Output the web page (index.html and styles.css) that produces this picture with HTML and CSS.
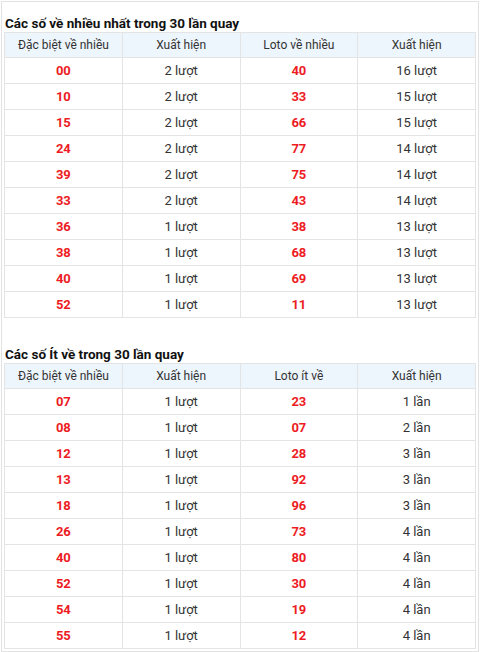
FILE: index.html
```html
<!DOCTYPE html>
<html lang="vi">
<head>
<meta charset="utf-8">
<title>Thống kê</title>
<link rel="stylesheet" href="styles.css">
</head>
<body>
<div class="wrap">
  <h3 class="title">Các số về nhiều nhất trong 30 lần quay</h3>
  <table class="stats">
    <thead>
      <tr><th>Đặc biệt về nhiều</th><th>Xuất hiện</th><th>Loto về nhiều</th><th>Xuất hiện</th></tr>
    </thead>
    <tbody>
      <tr><td class="num">00</td><td>2 lượt</td><td class="num">40</td><td>16 lượt</td></tr>
      <tr><td class="num">10</td><td>2 lượt</td><td class="num">33</td><td>15 lượt</td></tr>
      <tr><td class="num">15</td><td>2 lượt</td><td class="num">66</td><td>15 lượt</td></tr>
      <tr><td class="num">24</td><td>2 lượt</td><td class="num">77</td><td>14 lượt</td></tr>
      <tr><td class="num">39</td><td>2 lượt</td><td class="num">75</td><td>14 lượt</td></tr>
      <tr><td class="num">33</td><td>2 lượt</td><td class="num">43</td><td>14 lượt</td></tr>
      <tr><td class="num">36</td><td>1 lượt</td><td class="num">38</td><td>13 lượt</td></tr>
      <tr><td class="num">38</td><td>1 lượt</td><td class="num">68</td><td>13 lượt</td></tr>
      <tr><td class="num">40</td><td>1 lượt</td><td class="num">69</td><td>13 lượt</td></tr>
      <tr><td class="num">52</td><td>1 lượt</td><td class="num">11</td><td>13 lượt</td></tr>
    </tbody>
  </table>

  <h3 class="title title-second">Các số Ít về trong 30 lần quay</h3>
  <table class="stats">
    <thead>
      <tr><th>Đặc biệt về nhiều</th><th>Xuất hiện</th><th>Loto ít về</th><th>Xuất hiện</th></tr>
    </thead>
    <tbody>
      <tr><td class="num">07</td><td>1 lượt</td><td class="num">23</td><td>1 lần</td></tr>
      <tr><td class="num">08</td><td>1 lượt</td><td class="num">07</td><td>2 lần</td></tr>
      <tr><td class="num">12</td><td>1 lượt</td><td class="num">28</td><td>3 lần</td></tr>
      <tr><td class="num">13</td><td>1 lượt</td><td class="num">92</td><td>3 lần</td></tr>
      <tr><td class="num">18</td><td>1 lượt</td><td class="num">96</td><td>3 lần</td></tr>
      <tr><td class="num">26</td><td>1 lượt</td><td class="num">73</td><td>4 lần</td></tr>
      <tr><td class="num">40</td><td>1 lượt</td><td class="num">80</td><td>4 lần</td></tr>
      <tr><td class="num">52</td><td>1 lượt</td><td class="num">30</td><td>4 lần</td></tr>
      <tr><td class="num">54</td><td>1 lượt</td><td class="num">19</td><td>4 lần</td></tr>
      <tr><td class="num">55</td><td>1 lượt</td><td class="num">12</td><td>4 lần</td></tr>
    </tbody>
  </table>
</div>
</body>
</html>
```

FILE: styles.css
```css
html, body {
  margin: 0;
  padding: 0;
  background: #ffffff;
}

body {
  font-family: Roboto, "Liberation Sans", Arial, sans-serif;
  color: #333333;
}

.wrap {
  margin: 1px 1px 0 1px;
  border: 1px solid #e2e2e2;
  padding: 0 2px 2px 2px;
  width: 472px;
}

.title {
  margin: 12px 0 0 1px;
  font-size: 13.5px;
  line-height: 18px;
  font-weight: 700;
  color: #111111;
}

.title-second {
  margin-top: 27px;
}

.stats {
  width: 472px;
  border-collapse: collapse;
  table-layout: fixed;
  border: 1px solid #e2e2e2;
}

.stats th,
.stats td {
  border: 1px solid #e4e4e4;
  text-align: center;
  padding: 0;
  height: 25px;
}

.stats th {
  background: #edf5fd;
  font-size: 12px;
  font-weight: 400;
  color: #333333;
  height: 24px;
}

.stats td {
  font-size: 13px;
  color: #333333;
}

.stats td.num {
  color: #ed1c24;
  font-weight: 700;
}
```
